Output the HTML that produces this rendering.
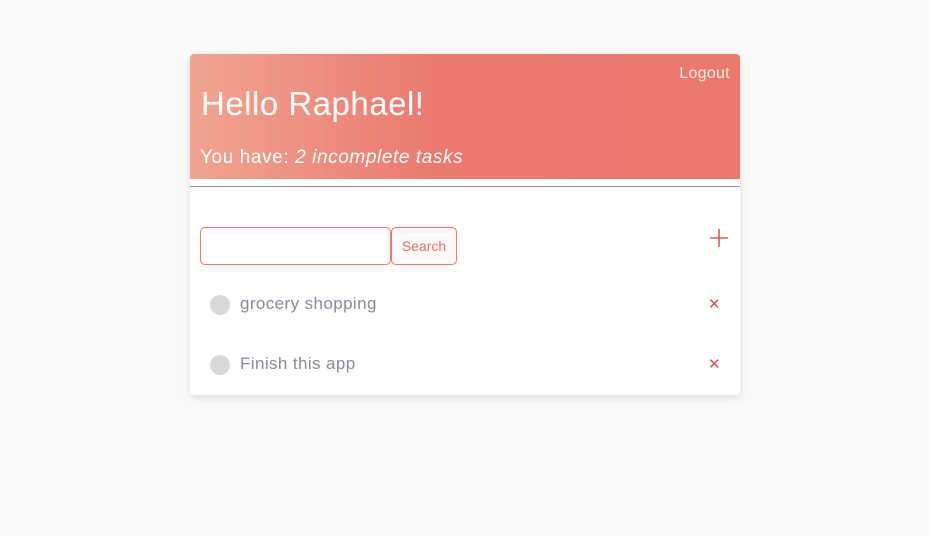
<!DOCTYPE html>
<html><head><style>
body{margin:0;background:#f9f9f9;width:929px;height:536px;font-family:"Liberation Sans",sans-serif;position:relative;overflow:hidden}
.card{position:absolute;left:190px;top:54px;width:550px;height:341px;background:#fff;border-radius:4px;box-shadow:0 3px 8px rgba(0,0,0,0.1)}
.head{position:absolute;left:0;top:0;width:550px;height:125px;border-radius:4px 4px 0 0;background:linear-gradient(90deg,#f0a590 0%,#ee9684 15%,#eb796e 45%,#eb786d 100%);color:#fff}
.logout{position:absolute;right:10px;top:11px;font-size:16px;font-weight:300;color:#fdeee9;letter-spacing:0.3px}
.hello{position:absolute;left:11px;top:31px;font-size:33px;font-weight:300;letter-spacing:0.5px}
.have{position:absolute;left:10px;top:93px;font-size:19px;letter-spacing:0.6px}
.line{position:absolute;left:0;top:132px;width:550px;height:1px;background:#999}
.inp{position:absolute;left:10px;top:173px;width:189px;height:36px;border:1px solid #eb7a6f;border-radius:5px}
.btn{position:absolute;left:201px;top:173px;width:64px;height:36px;border:1px solid #eb7a6f;border-radius:5px;background:#f9f9f9;color:#ea6f64;font-size:14px;text-align:center;line-height:36px}
.plus{position:absolute;left:519px;top:174px}
.dot{position:absolute;left:20px;width:20px;height:20px;border-radius:50%;background:#d9d9d9}
.t{position:absolute;left:50px;font-size:17px;font-weight:300;color:#8a8a9a;letter-spacing:0.4px}
.x{position:absolute;left:518px;font-size:15px;color:#d0504a}
</style></head><body>
<div class="card">
<div class="head">
<div class="logout">Logout</div>
<div class="hello">Hello Raphael!</div>
<div class="have">You have: <i>2 incomplete tasks</i></div>
</div>
<div class="line"></div>
<div class="inp"></div>
<div class="btn">Search</div>
<svg class="plus" width="20" height="20" viewBox="0 0 20 20"><path d="M10 1V19M1 10H19" stroke="#d0605a" stroke-width="1.6"/></svg>
<div class="dot" style="top:241px"></div><div class="t" style="top:240px">grocery shopping</div><div class="x" style="top:241px">✕</div>
<div class="dot" style="top:301px"></div><div class="t" style="top:300px">Finish this app</div><div class="x" style="top:301px">✕</div>
</div>
</body></html>
